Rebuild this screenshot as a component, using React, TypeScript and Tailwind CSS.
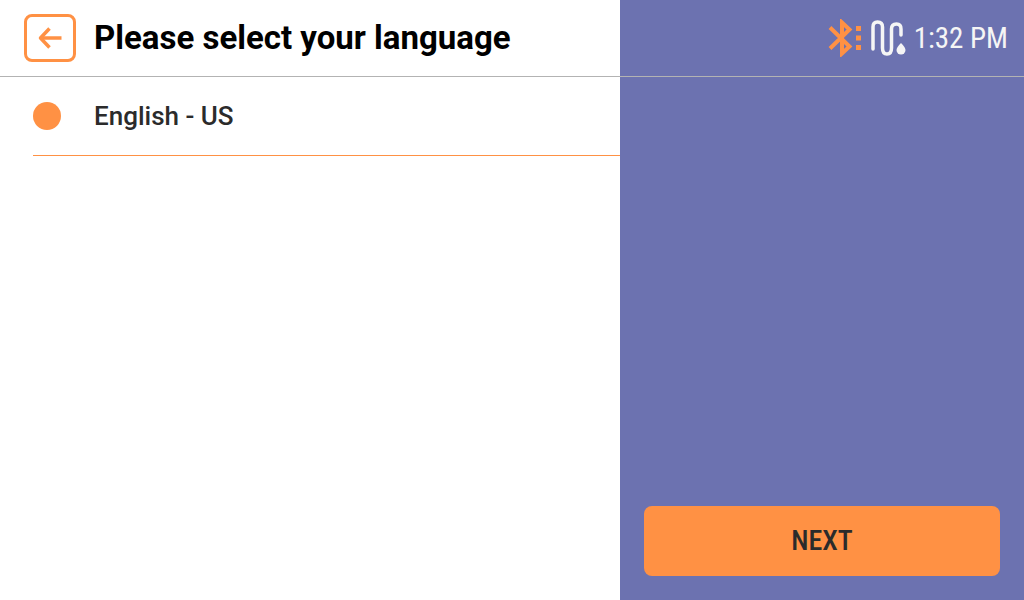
export default function App() {
  return (
    <div className="flex min-h-screen flex-col bg-white font-['Roboto',sans-serif]">
      <header className="flex border-b border-[#b3b3b3]">
        <div className="flex flex-1 items-center gap-[18px] py-3.5 pl-6">
          <button
            type="button"
            aria-label="Back"
            className="flex h-12 w-[52px] items-center justify-center rounded-lg border-[3px] border-[#ff9144] text-[#ff9144]"
          >
            <svg viewBox="0 0 26 24" className="h-6 w-[26px]" fill="none" stroke="currentColor" strokeWidth="3.500">
              <path d="M24.500 12H4" />
              <path d="M12.500 2.500L3.500 12L12.500 21.500" strokeLinejoin="round" />
            </svg>
          </button>
          <h1 className="text-[33px] leading-10 font-bold whitespace-nowrap text-black">Please select your language</h1>
        </div>
        <div className="flex w-[404px] items-center justify-end gap-2 bg-[#6c72b0] pr-4 text-[#f5f5f5]">
          <svg viewBox="0 0 34 38" className="h-[38px] w-[34px] text-[#ff9144]" fill="none" stroke="currentColor" strokeWidth="4" role="img" aria-label="Bluetooth">
            <path d="M2 8.500L21.500 27.500L14 34.500V3.500L21.500 10.500L2 29.500" />
            <path d="M28 9.500H33M28 19H33M28 28.500H33" strokeWidth="5" />
          </svg>
          <svg viewBox="0 0 36 38" className="h-[38px] w-9" fill="none" stroke="currentColor" strokeWidth="3.500" strokeLinecap="round" role="img" aria-label="Hose">
            <path d="M3 30V8Q3 3 7.500 3Q12.500 3 12.500 8V29Q12.500 35 17 35Q21.500 35 21.500 29V10Q21.500 5 26.500 5Q31 5 31 10V16" />
            <path d="M31 24Q26.500 28.500 26.500 31A4.500 4.500 0 0 0 35.500 31Q35.500 28.500 31 24Z" fill="currentColor" stroke="none" />
          </svg>
          <time className="font-['Roboto_Condensed','Roboto',sans-serif] text-[29px] leading-10 whitespace-nowrap">1:32 PM</time>
        </div>
      </header>
      <div className="flex flex-1">
        <main className="flex-1 pl-[33px]">
          <label className="flex h-[79px] items-center gap-[33px] border-b border-[#ff9144] text-[26px] font-medium text-[#2b2b2b]">
            <input type="radio" name="language" defaultChecked className="size-7 appearance-none rounded-full bg-[#ff9144]" />
            English - US
          </label>
        </main>
        <aside className="flex w-[404px] flex-col justify-end bg-[#6c72b0] p-6">
          <button
            type="button"
            className="h-[70px] rounded-lg bg-[#ff9144] font-['Roboto_Condensed','Roboto',sans-serif] text-[28px] font-medium text-[#2b2b2b]"
          >
            NEXT
          </button>
        </aside>
      </div>
    </div>
  );
}
